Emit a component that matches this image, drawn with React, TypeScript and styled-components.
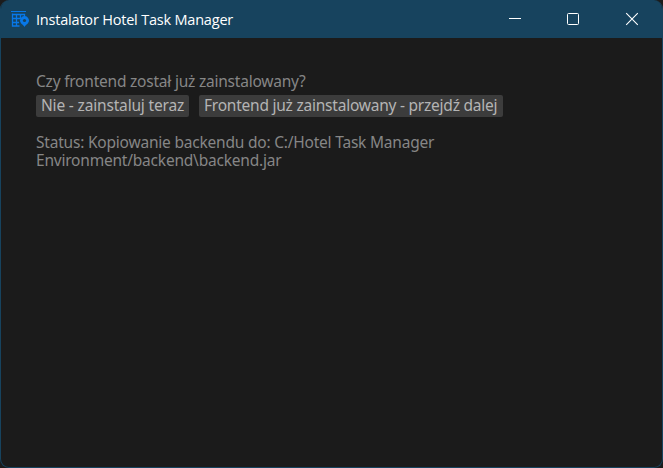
import React from "react";
import styled, { createGlobalStyle } from "styled-components";

const GlobalStyle = createGlobalStyle`
  html, body { margin: 0; background: #1c1c1c; overflow: hidden; }
  * { box-sizing: border-box; }
`;

const Window = styled.div`
  display: flex;
  flex-direction: column;
  width: 663px;
  height: 468px;
  border: 1px solid #17435e;
  border-top: 0;
  border-radius: 9px;
  overflow: hidden;
  background: #1b1b1b;
`;

const TitleBar = styled.header`
  display: flex;
  align-items: center;
  height: 38px;
  flex: none;
  padding-left: 10px;
  background: #17435e;
  color: #fff;
`;

const AppIcon = styled.svg`
  width: 18px;
  height: 18px;
  margin-right: 7px;
  flex: none;
`;

const Title = styled.div`
  flex: 1;
  padding-top: 2px;
  font: 400 14.5px/20px "Open Sans", sans-serif;
  letter-spacing: -0.2px;
  white-space: nowrap;
`;

const Controls = styled.div`
  display: flex;
  height: 100%;
  margin-right: 1px;
`;

const ControlButton = styled.button`
  display: grid;
  place-items: center;
  width: 58.5px;
  height: 38px;
  padding: 0;
  border: 0;
  background: none;
  color: #fff;

  svg {
    width: 14px;
    height: 14px;
  }
`;

const Content = styled.main`
  display: flex;
  flex-direction: column;
  align-items: flex-start;
  padding: 34px 35px;
  font: 400 15.5px/18px "Noto Sans", sans-serif;
  color: #868686;
`;

const Message = styled.p<{ $spacing: number }>`
  margin: 0;
  max-width: 440px;
  letter-spacing: ${(p) => p.$spacing}px;
`;

const Actions = styled.div`
  display: flex;
  gap: 10px;
  margin: 5px 0 16px;
`;

const ActionButton = styled.button<{ $width: number; $spacing: number }>`
  width: ${(p) => p.$width}px;
  height: 22px;
  padding: 0 0 3px 5px;
  border: 0;
  border-radius: 2px;
  background: #3c3c3c;
  color: #b4b4b4;
  font: inherit;
  line-height: 18px;
  letter-spacing: ${(p) => p.$spacing}px;
  text-align: left;
  white-space: nowrap;
`;

export default function App() {
  return (
    <>
      <GlobalStyle />
      <Window>
        <TitleBar>
          <AppIcon viewBox="0 0 18 18" fill="none" stroke="#0878e8">
            <path d="M0 1.5H15" strokeWidth="1.2" />
            <path d="M1.5 3.5V16H8.5M1.5 4.5H13.5V6M5.5 4V16M9.5 4V9M1.5 8.5H9M1.5 12.5H8" strokeWidth="1.3" />
            <path
              d="M13.5 17C12 14.8 9 13.3 9 10.6a4.5 4.5 0 0 1 9 0c0 2.7-3 4.2-4.5 6.4Z"
              fill="#0878e8"
              stroke="none"
            />
            <circle cx="13.5" cy="10.5" r="1.6" fill="#17435e" stroke="none" />
          </AppIcon>
          <Title>Instalator Hotel Task Manager</Title>
          <Controls>
            <ControlButton aria-label="Minimalizuj">
              <svg viewBox="0 0 14 14" stroke="currentColor"><path d="M1 6.5H13" /></svg>
            </ControlButton>
            <ControlButton aria-label="Maksymalizuj">
              <svg viewBox="0 0 14 14" fill="none" stroke="currentColor">
                <rect x="1.5" y="1.5" width="11" height="11" rx="1" />
              </svg>
            </ControlButton>
            <ControlButton aria-label="Zamknij">
              <svg viewBox="0 0 14 14" stroke="currentColor" strokeWidth="1.1">
                <path d="M1.2 1.2 12.8 12.8M12.8 1.2 1.2 12.8" />
              </svg>
            </ControlButton>
          </Controls>
        </TitleBar>
        <Content>
          <Message $spacing={-0.22}>Czy frontend został już zainstalowany?</Message>
          <Actions>
            <ActionButton $width={153} $spacing={-0.17}>Nie - zainstaluj teraz</ActionButton>
            <ActionButton $width={304} $spacing={-0.23}>Frontend już zainstalowany - przejdź dalej</ActionButton>
          </Actions>
          <Message $spacing={-0.21}>
            Status: Kopiowanie backendu do: C:/Hotel Task Manager Environment/backend\backend.jar
          </Message>
        </Content>
      </Window>
    </>
  );
}
